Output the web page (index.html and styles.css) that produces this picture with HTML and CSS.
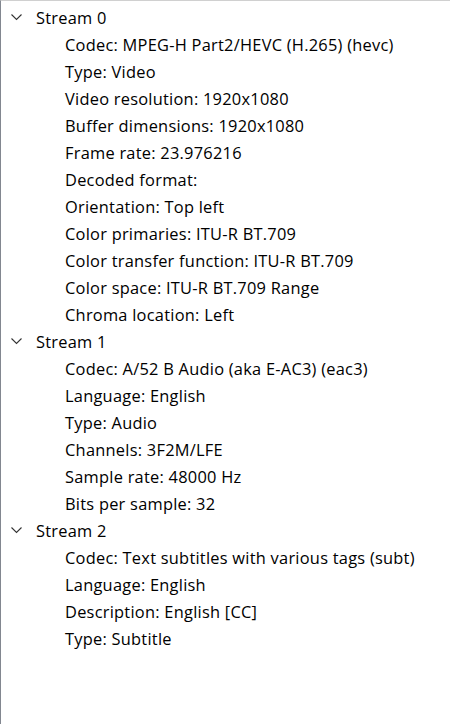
FILE: index.html
```html
<!DOCTYPE html>
<html lang="en">
<head>
    <meta charset="UTF-8">
    <title>Codec Information</title>
    <link rel="stylesheet" href="styles.css">
</head>
<body>
    <div class="tree">
        <!-- Stream 0 -->
        <div class="node">
            <div class="node-title">
                <svg class="chevron" width="11" height="7" viewBox="0 0 11 7"><polyline points="0.5,0.5 5.5,5.5 10.5,0.5" /></svg>
                Stream 0
            </div>
            <ul class="props">
                <li>Codec: MPEG-H Part2/HEVC (H.265) (hevc)</li>
                <li>Type: Video</li>
                <li>Video resolution: 1920x1080</li>
                <li>Buffer dimensions: 1920x1080</li>
                <li>Frame rate: 23.976216</li>
                <li>Decoded format:</li>
                <li>Orientation: Top left</li>
                <li>Color primaries: ITU-R BT.709</li>
                <li>Color transfer function: ITU-R BT.709</li>
                <li>Color space: ITU-R BT.709 Range</li>
                <li>Chroma location: Left</li>
            </ul>
        </div>

        <!-- Stream 1 -->
        <div class="node">
            <div class="node-title">
                <svg class="chevron" width="11" height="7" viewBox="0 0 11 7"><polyline points="0.5,0.5 5.5,5.5 10.5,0.5" /></svg>
                Stream 1
            </div>
            <ul class="props">
                <li>Codec: A/52 B Audio (aka E-AC3) (eac3)</li>
                <li>Language: English</li>
                <li>Type: Audio</li>
                <li>Channels: 3F2M/LFE</li>
                <li>Sample rate: 48000 Hz</li>
                <li>Bits per sample: 32</li>
            </ul>
        </div>

        <!-- Stream 2 -->
        <div class="node">
            <div class="node-title">
                <svg class="chevron" width="11" height="7" viewBox="0 0 11 7"><polyline points="0.5,0.5 5.5,5.5 10.5,0.5" /></svg>
                Stream 2
            </div>
            <ul class="props">
                <li>Codec: Text subtitles with various tags (subt)</li>
                <li>Language: English</li>
                <li>Description: English [CC]</li>
                <li>Type: Subtitle</li>
            </ul>
        </div>
    </div>
</body>
</html>
```

FILE: styles.css
```css
/* Geral */
html, body {
    margin: 0;
    height: 100%;
}

body {
    font-family: "Open Sans", "Noto Sans", sans-serif;
    font-size: 16.4px;
    letter-spacing: 0.25px;
    color: #000;
    background-color: #fff;
}

/* Árvore */
.tree {
    box-sizing: border-box;
    height: 100%;
    border-top: 1px solid #d0d0d0;
    border-left: 1px solid #828790;
    padding-top: 3px;
}

.node-title,
.props li {
    height: 27px;
    line-height: 27px;
    white-space: nowrap;
}

.node-title {
    display: flex;
    align-items: center;
    padding-left: 10px;
}

.chevron {
    fill: none;
    stroke: #333;
    stroke-width: 1.1;
    margin: 0 14px 0 0;
}

.props {
    list-style: none;
    margin: 0;
    padding: 0 0 0 64px;
}
```
